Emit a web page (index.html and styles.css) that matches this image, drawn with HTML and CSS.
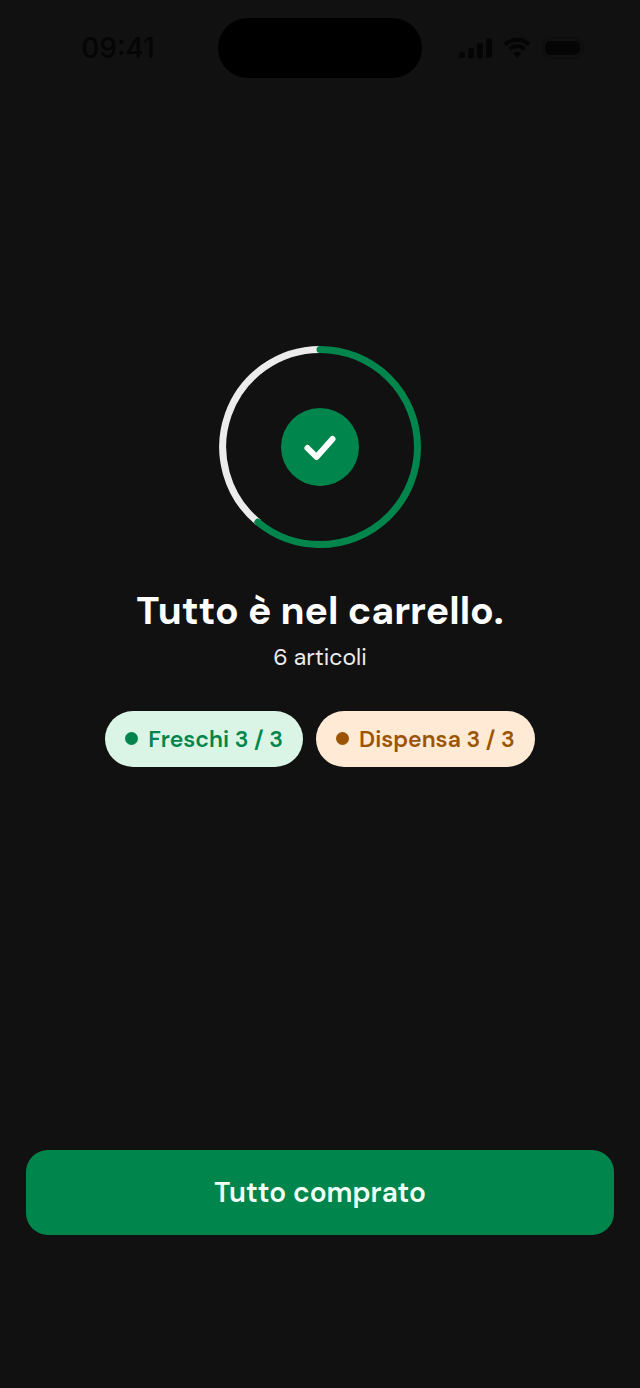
FILE: index.html
```
<!DOCTYPE html>
<html lang="it">
<head>
    <title>Tutto è nel carrello</title>
    <meta charset="UTF-8">
    <meta name="viewport" content="width=device-width, initial-scale=1">
    <link rel="stylesheet" href="styles.css">
</head>
<body>
    <div class="screen">
        <header class="status-bar">
            <span class="status-time">09:41</span>
            <div class="island"></div>
            <div class="status-icons">
                <svg width="34" height="22" viewBox="0 0 34 22">
                    <rect x="0" y="15" width="6" height="6" rx="2"/>
                    <rect x="9" y="11" width="6" height="10" rx="2"/>
                    <rect x="18" y="6" width="6" height="15" rx="2"/>
                    <rect x="27" y="1" width="6" height="20" rx="2"/>
                </svg>
                <svg width="28" height="22" viewBox="0 0 28 22">
                    <path class="wave" d="M2 7.5a17.5 17.5 0 0 1 24 0M6.5 12.2a11 11 0 0 1 15 0"/>
                    <path d="M14 21l-4.2-4.6a6.2 6.2 0 0 1 8.4 0z"/>
                </svg>
                <svg width="44" height="22" viewBox="0 0 44 22">
                    <rect class="battery-shell" x="2" y="1" width="39" height="20" rx="7"/>
                    <rect x="4" y="4" width="35" height="14" rx="5"/>
                    <path class="battery-cap" d="M42 8c2 1 2 5 0 6z"/>
                </svg>
            </div>
        </header>

        <main class="summary">
            <svg class="ring" viewBox="0 0 202 202">
                <path class="ring-track" d="M39.5 176.5A97.5 97.5 0 0 1 101 3.5"/>
                <circle class="ring-value" cx="101" cy="101" r="97.5" pathLength="100" stroke-dasharray="61 100" transform="rotate(-90 101 101)"/>
                <circle class="ring-badge" cx="101" cy="101" r="39"/>
                <path class="ring-check" d="M88.5 102l9 9 16-18"/>
            </svg>
            <h1>Tutto è nel carrello.</h1>
            <p class="count">6 articoli</p>
            <div class="chips">
                <span class="chip chip-fresh">Freschi 3 / 3</span>
                <span class="chip chip-pantry">Dispensa 3 / 3</span>
            </div>
        </main>

        <footer class="actions">
            <button type="button" class="done-button">Tutto comprato</button>
        </footer>
    </div>
</body>
</html>
```

FILE: styles.css
```
* {
    box-sizing: border-box;
}
body {
    margin: 0;
    background: #111111;
    color: #ffffff;
    font-family: "DM Sans", Inter, sans-serif;
}
.screen {
    display: flex;
    flex-direction: column;
    min-height: 100vh;
}
.status-bar {
    display: grid;
    grid-template-columns: 1fr 204px 1fr;
    align-items: center;
    padding: 18px 18px 0;
    color: #050505;
}
.status-time {
    text-align: center;
    font-family: Inter, sans-serif;
    font-size: 28px;
    font-weight: 500;
}
.island {
    height: 60px;
    border-radius: 30px;
    background: #000000;
}
.status-icons {
    display: flex;
    justify-content: center;
    gap: 10px;
    fill: #050505;
}
.wave {
    fill: none;
    stroke: #050505;
    stroke-width: 4;
}
.battery-shell {
    fill: none;
    stroke: #0e0e0e;
    stroke-width: 2;
}
.battery-cap {
    fill: #0e0e0e;
}
.summary {
    flex-grow: 1;
    display: flex;
    flex-direction: column;
    align-items: center;
    justify-content: center;
    padding: 0 24px 116px;
    text-align: center;
}
.ring {
    width: 202px;
    height: 202px;
    fill: none;
}
.ring-track {
    stroke: #ececec;
    stroke-width: 7;
}
.ring-value {
    stroke: #00864c;
    stroke-width: 7;
    stroke-linecap: round;
}
.ring-badge {
    fill: #00864c;
}
.ring-check {
    stroke: #ffffff;
    stroke-width: 6;
    stroke-linecap: round;
    stroke-linejoin: round;
}
h1 {
    margin: 37px 0 0;
    font-size: 39px;
    line-height: 52px;
    font-weight: 700;
}
.count {
    margin: 4px 0 0;
    font-size: 23px;
    line-height: 32px;
    color: #ececec;
}
.chips {
    display: flex;
    flex-wrap: wrap;
    justify-content: center;
    gap: 13px;
    margin-top: 38px;
}
.chip {
    display: flex;
    align-items: center;
    gap: 10px;
    padding: 12px 20px;
    border-radius: 28px;
    font-size: 23px;
    line-height: 32px;
    font-weight: 600;
}
.chip::before {
    content: "";
    width: 13px;
    height: 13px;
    border-radius: 50%;
    background: currentColor;
}
.chip-fresh {
    background: #daf5e6;
    color: #00864c;
}
.chip-pantry {
    background: #ffead6;
    color: #9c5400;
}
.actions {
    padding: 0 26px 153px;
}
.done-button {
    width: 100%;
    padding: 24px;
    border: none;
    border-radius: 22px;
    background: #00864c;
    color: #f0fff6;
    font-family: inherit;
    font-size: 28px;
    line-height: 37px;
    font-weight: 600;
    cursor: pointer;
}
.done-button:hover {
    background: #007542;
}
```
